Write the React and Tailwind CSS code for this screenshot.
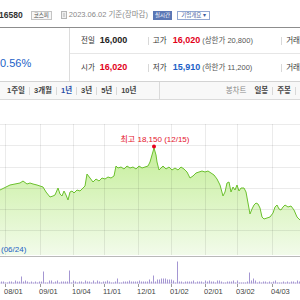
import { useMemo } from "react";

const FONT = { fontFamily: '"Liberation Sans", "Noto Sans CJK KR", sans-serif' };

const PRICE = [
  [0, 90], [4, 88], [10, 85], [15, 84], [20, 83], [23, 81], [27, 84], [30, 83], [33, 84], [37, 85],
  [40, 86], [43, 87], [46, 92], [50, 97], [53, 96], [55, 95], [58, 88], [60, 94], [62, 96], [64, 91],
  [66, 95], [68, 100], [70, 92], [72, 91], [74, 93], [77, 90], [80, 91], [83, 88], [85, 86], [87, 74],
  [90, 78], [93, 82], [96, 79], [99, 81], [102, 78], [105, 79], [108, 77], [111, 78], [114, 76], [116, 66],
  [118, 68], [121, 67], [124, 69], [127, 66], [130, 68], [133, 67], [136, 69], [139, 66], [142, 68], [145, 67],
  [148, 66], [150, 62], [152, 55], [154, 48], [156, 55], [157, 62], [159, 70], [161, 68], [163, 66], [166, 69],
  [169, 67], [172, 70], [175, 68], [178, 70], [181, 67], [184, 69], [187, 72], [190, 78], [193, 76], [196, 73],
  [199, 72], [202, 71], [205, 72], [208, 71], [211, 73], [214, 75], [217, 79], [220, 85], [223, 96], [225, 92],
  [227, 83], [229, 82], [231, 92], [233, 87], [235, 90], [237, 85], [239, 91], [241, 88], [244, 88], [246, 92],
  [248, 103], [250, 114], [252, 109], [254, 105], [256, 103], [258, 104], [260, 108], [262, 117], [264, 119], [267, 118],
  [270, 117], [273, 113], [275, 107], [277, 105], [279, 109], [281, 110], [283, 107], [285, 105], [288, 107], [291, 106],
  [294, 110], [297, 117], [300, 120],
];

const GRID_X = [5, 40, 73, 104, 138, 171, 205, 237, 272];
const GRID_Y = [24, 45, 67, 88, 109, 130];
const DATES = ["08/01", "09/01", "10/04", "11/01", "12/01", "01/02", "02/01", "03/02", "04/03"];
const TALL = { 21: 7, 43: 12, 64: 14, 69: 13, 117: 5, 150: 6, 153: 8, 156: 7, 160: 6, 165: 5, 170: 9, 174: 7, 177: 22, 222: 4, 249: 11, 253: 5, 276: 4 };

function Sep() {
  return <span className="mx-[4px] inline-block h-[8px] w-px bg-[#d8d8d8]" />;
}

function Chart() {
  const line = PRICE.map(([x, y], i) => `${i ? "L" : "M"}${x} ${y}`).join(" ");
  const area = `${line} L300 155 L0 155 Z`;

  const bars = useMemo(() => {
    let seed = 7;
    const rand = () => {
      seed = (seed * 9301 + 49297) % 233280;
      return seed / 233280;
    };
    const out = [];
    for (let x = 1; x < 300; x += 2) {
      const h = TALL[x] ?? 1 + Math.round(rand() * (x > 145 && x < 178 ? 4 : 2));
      out.push([x, h]);
    }
    return out;
  }, []);

  return (
    <svg width="300" height="200" viewBox="0 0 300 200" className="block">
      <defs>
        <linearGradient id="fill" x1="0" y1="45" x2="0" y2="155" gradientUnits="userSpaceOnUse">
          <stop offset="0" stopColor="#c4ee98" />
          <stop offset="1" stopColor="#f2fbea" />
        </linearGradient>
      </defs>
      <path d={area} fill="url(#fill)" />
      {GRID_Y.map((y) => (
        <line key={y} x1="0" x2="300" y1={y + 0.5} y2={y + 0.5} stroke="rgba(0,0,0,0.08)" />
      ))}
      {GRID_X.map((x) => (
        <line key={x} x1={x + 0.5} x2={x + 0.5} y1="24" y2="155" stroke="rgba(0,0,0,0.08)" />
      ))}
      <path d={line} fill="none" stroke="#6cc12e" strokeWidth="1" />
      <circle cx="154" cy="46.5" r="2" fill="#e8001c" />
      <text x="155" y="42" textAnchor="middle" fontSize="8" fill="#e5132b" style={FONT}>
        최고 18,150 (12/15)
      </text>
      <text x="1" y="152" fontSize="8" fill="#1b5fc4" style={FONT}>
        (06/24)
      </text>
      <line x1="0" x2="300" y1="156.5" y2="156.5" stroke="#b9b9b9" />
      <line x1="0" x2="300" y1="183" y2="183" stroke="#d8d2ea" />
      {bars.map(([x, h]) => (
        <line key={x} x1={x + 0.5} x2={x + 0.5} y1={183.5} y2={183.5 - h} stroke="#a496d2" strokeWidth="1" />
      ))}
      {GRID_X.map((x, i) => (
        <g key={x}>
          <line x1={x + 0.5} x2={x + 0.5} y1="184" y2="187" stroke="#999" />
          <text x={x - 1} y="194" fontSize="7.5" fill="#444" style={FONT}>
            {DATES[i]}
          </text>
        </g>
      ))}
    </svg>
  );
}

export default function App() {
  return (
    <div className="h-[300px] w-[300px] overflow-hidden bg-white text-[#333]" style={FONT}>
      <div className="flex h-[27px] items-center whitespace-nowrap pt-[3px]">
        <span className="-ml-[1px] text-[8.5px] font-bold text-[#333]">16580</span>
        <span className="ml-[8px] flex h-[9px] items-center border border-[#c4c4c4] bg-[#f7f7f7] px-[2px] text-[5.5px] text-[#444]">
          코스피
        </span>
        <svg width="7" height="8" viewBox="0 0 7 8" className="ml-[9px]">
          <rect x="0.5" y="0.5" width="5" height="7" fill="#eee" stroke="#b5b5b5" />
          <path d="M2 3h2M2 5h2" stroke="#b5b5b5" />
        </svg>
        <span className="ml-[1px] text-[7.5px] text-[#888]">2023.06.02 기준(장마감)</span>
        <span className="ml-[5px] flex h-[9px] items-center bg-[#5b77b5] px-[2px] text-[5.5px] text-white">실시간</span>
        <span className="ml-[5px] flex h-[9px] items-center border border-[#93a9d2] px-[3px] text-[5.5px] text-[#3d5c9c]">
          기업개요 ▾
        </span>
      </div>

      <div className="flex h-[55px] border-y border-t-[#8d8d8d] border-b-[#d3d3d3]">
        <div className="flex w-[70px] shrink-0 items-end border-r border-[#dcdcdc] pb-[10px]">
          <span className="text-[11px] text-[#1c5fc7]">0.56%</span>
        </div>
        <div className="flex flex-1 flex-col whitespace-nowrap">
          <div className="flex h-[26px] items-center border-b border-[#e6e6e6] pt-[1px] text-[9px]">
            <span className="ml-[11px] text-[7.5px]">전일</span>
            <span className="ml-[5px] w-[44px] font-bold text-[#222]">16,000</span>
            <Sep />
            <span className="text-[7.5px]">고가</span>
            <span className="ml-[6px] font-bold text-[#e2001a]">16,020</span>
            <span className="ml-[2px] text-[7.5px] text-[#555]">(상한가 20,800)</span>
            <span className="ml-auto flex items-center">
              <Sep />
              <span className="text-[7.5px]">거래</span>
            </span>
          </div>
          <div className="flex flex-1 items-center pt-[1px] text-[9px]">
            <span className="ml-[11px] text-[7.5px]">시가</span>
            <span className="ml-[5px] w-[44px] font-bold text-[#e2001a]">16,020</span>
            <Sep />
            <span className="text-[7.5px]">저가</span>
            <span className="ml-[6px] font-bold text-[#1c5fc7]">15,910</span>
            <span className="ml-[2px] text-[7.5px] text-[#555]">(하한가 11,200)</span>
            <span className="ml-auto flex items-center">
              <Sep />
              <span className="text-[7.5px]">거래</span>
            </span>
          </div>
        </div>
      </div>

      <div className="flex h-[18px] border-b border-[#dadada] bg-[#f8f8f8] whitespace-nowrap text-[7.5px] font-bold text-[#444]">
        <div className="flex w-[160px] items-center border-r border-[#dadada] pl-[7px]">
          <span>1주일</span>
          <Sep />
          <span>3개월</span>
          <Sep />
          <span className="text-[#2a4fa8]">1년</span>
          <Sep />
          <span>3년</span>
          <Sep />
          <span>5년</span>
          <Sep />
          <span>10년</span>
        </div>
        <div className="flex flex-1 items-center justify-end">
          <span className="font-normal text-[#888]">봉차트</span>
          <span className="ml-[8px]">일봉</span>
          <Sep />
          <span>주봉</span>
          <Sep />
        </div>
      </div>

      <Chart />
    </div>
  );
}
